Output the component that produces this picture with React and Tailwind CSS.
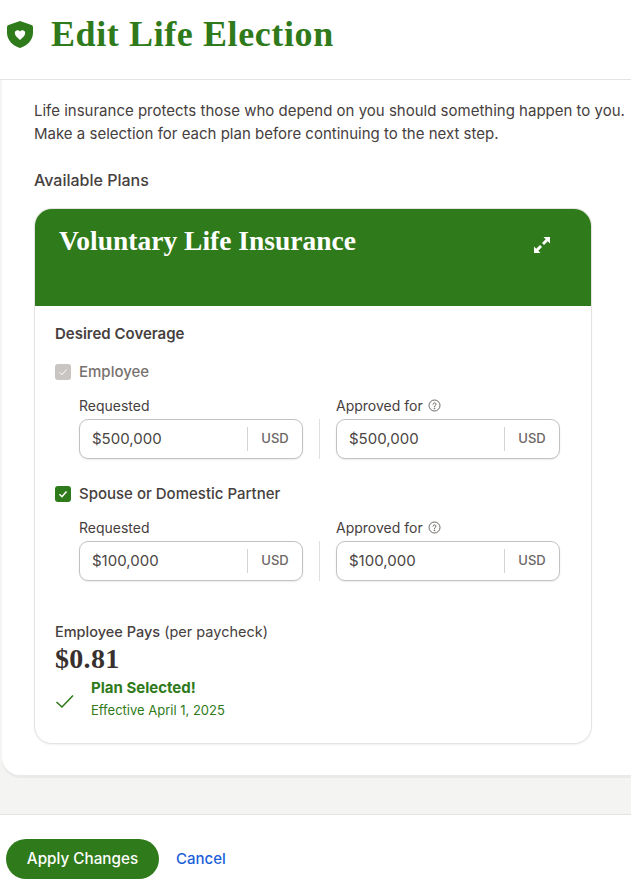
import React from 'react';

const sans = { fontFamily: 'Inter, sans-serif' };

const ShieldIcon = () => (
  <svg width="28" height="28" viewBox="0 0 28 28" className="shrink-0">
    <path
      fillRule="evenodd"
      d="M14 1 L25.5 5 Q27 5.5 27 7 V13 C27 20 21 26 14 28 C7 26 1 20 1 13 V7 Q1 5.5 2.5 5 Z M14 11.5 C12.6 9.4 8.8 9.8 8.8 13 C8.8 15.6 11.6 17.8 14 20 C16.4 17.8 19.2 15.6 19.2 13 C19.2 9.8 15.4 9.4 14 11.5 Z"
      fill="#2f7a1a"
    />
  </svg>
);

const ExpandIcon = () => (
  <svg width="18" height="18" viewBox="0 0 18 18" fill="white">
    <path d="M10.5 1 H17 V7.5 L14.8 5.3 L11 9 L9 7 L12.7 3.2 Z" />
    <path d="M7.5 17 H1 V10.5 L3.2 12.7 L7 9 L9 11 L5.3 14.8 Z" />
  </svg>
);

const HelpIcon = () => (
  <svg width="13" height="13" viewBox="0 0 13 13" fill="none" stroke="#6b6663" strokeWidth="1">
    <circle cx="6.5" cy="6.5" r="5.5" />
    <path d="M5 5.2 C5 3.4 8 3.4 8 5.2 C8 6.3 6.5 6.3 6.5 7.6" strokeLinecap="round" />
    <circle cx="6.5" cy="9.4" r="0.4" fill="#6b6663" />
  </svg>
);

const Checkbox = ({ disabled }) => (
  <span className={`flex w-4 h-4 items-center justify-center rounded-[3px] ${disabled ? 'bg-[#c9c5c2]' : 'bg-[#2f7a1a]'}`}>
    <svg width="10" height="10" viewBox="0 0 10 10" fill="none" stroke="white" strokeWidth={disabled ? 1 : 1.6}>
      <path d="M1.5 5.2 L4 7.7 L8.5 2.5" />
    </svg>
  </span>
);

const AmountInput = ({ label, value, help }) => (
  <div className="w-[224px]">
    <div className="flex items-center gap-[5px] h-[18px] mb-[5px] text-[14px] text-[#46403e]">
      {label}
      {help && <HelpIcon />}
    </div>
    <div className="flex items-center h-[40px] pl-[12px] bg-white border border-[#c4c1bf] rounded-[9px] shadow-[0_1px_2px_rgba(0,0,0,0.08)]">
      <span className="flex-1 text-[15px] text-[#4a4543]">{value}</span>
      <span className="w-[55px] h-[24px] flex items-center justify-center border-l border-[#d5d2d0] text-[13px] font-medium text-[#6b6663]">USD</span>
    </div>
  </div>
);

const CoverageRow = ({ name, value, disabled }) => (
  <div>
    <div className="flex items-center gap-2 h-[20px]">
      <Checkbox disabled={disabled} />
      <span className={`text-[15px] font-medium ${disabled ? 'text-[#78726f]' : 'text-[#46403e]'}`}>{name}</span>
    </div>
    <div className="flex items-end ml-6 mt-[14px]">
      <AmountInput label="Requested" value={value} />
      <div className="w-px h-[40px] mx-4 bg-[#e2e0de]" />
      <AmountInput label="Approved for" value={value} help />
    </div>
  </div>
);

export default function App() {
  return (
    <div className="h-[891px] overflow-hidden bg-white flex flex-col" style={sans}>
      <header className="h-[80px] shrink-0 flex items-center gap-[17px] pl-[6px] pb-[11px] border-b border-[#e4e3e1]">
        <ShieldIcon />
        <h1 className="text-[36px] font-bold tracking-[0.6px] text-[#2f7a1a]" style={{ fontFamily: '"Liberation Serif", serif' }}>Edit Life Election</h1>
      </header>

      <main className="h-[734px] shrink-0 bg-[#f4f4f2]">
        <div className="h-[695px] ml-[2px] pl-[32px] pt-[19px] bg-white rounded-bl-[18px] shadow-[0_3px_0_#eaeae8]">
          <p className="text-[15px] leading-[23px] text-[#46403e] whitespace-nowrap">
            Life insurance protects those who depend on you should something happen to you.
            <br />
            Make a selection for each plan before continuing to the next step.
          </p>
          <h2 className="mt-[24px] text-[16px] leading-[22px] font-medium text-[#46403e]">Available Plans</h2>

          <section className="w-[558px] h-[536px] mt-[17px] bg-white border border-[#e4e3e1] rounded-[18px] overflow-hidden shadow-[0_1px_2px_rgba(0,0,0,0.06)]">
            <div className="h-[98px] -mx-px -mt-px bg-[#2f7a1a] flex items-start justify-between pl-[25px] pr-[41px] pt-[16px]">
              <h3 className="text-[27.5px] leading-[34px] font-bold text-white" style={{ fontFamily: '"Liberation Serif", serif' }}>Voluntary Life Insurance</h3>
              <span className="mt-[12px]"><ExpandIcon /></span>
            </div>
            <div className="pl-[20px] pt-[18px]">
              <div className="text-[15px] leading-[20px] font-semibold text-[#46403e] mb-[18px]">Desired Coverage</div>
              <div className="flex flex-col gap-[25px]">
                <CoverageRow name="Employee" value="$500,000" disabled />
                <CoverageRow name="Spouse or Domestic Partner" value="$100,000" />
              </div>
              <div className="mt-[41px] text-[14.5px] leading-[20px] text-[#46403e]">
                <span className="font-medium">Employee Pays</span> (per paycheck)
              </div>
              <div className="text-[28px] tracking-[0.3px] leading-[34px] font-bold text-[#38302e]" style={{ fontFamily: '"Liberation Serif", serif' }}>$0.81</div>
              <div className="flex items-center mt-[2px]">
                <svg width="20" height="20" viewBox="0 0 20 20" fill="none" stroke="#2f7a1a" strokeWidth="1.6" className="shrink-0 mt-[3px]">
                  <path d="M1.5 11 L7 16 L18 4.5" />
                </svg>
                <div className="ml-4">
                  <div className="text-[15px] leading-[20px] font-bold text-[#2f7a1a]">Plan Selected!</div>
                  <div className="text-[13px] leading-[20px] mt-[2px] text-[#2f7a1a]">Effective April 1, 2025</div>
                </div>
              </div>
            </div>
          </section>
        </div>
      </main>

      <footer className="flex-1 bg-white border-t border-[#e4e3e1] pl-[6px] pt-[24px] flex items-start gap-[17px]">
        <button className="w-[153px] h-[40px] rounded-full bg-[#2f7a1a] text-white text-[15.25px] font-medium">Apply Changes</button>
        <a className="h-[40px] flex items-center text-[15px] font-medium text-[#1b5fd9]">Cancel</a>
      </footer>
    </div>
  );
}
